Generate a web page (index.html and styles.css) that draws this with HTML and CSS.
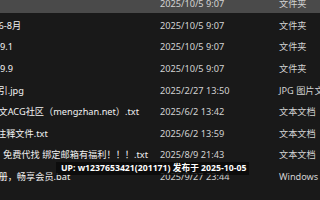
FILE: index.html
```html
<!DOCTYPE html>
<html lang="zh-CN">
<head>
<meta charset="utf-8">
<link rel="stylesheet" href="styles.css">
</head>
<body>
<div class="list">
  <div class="row selected"><div class="name"></div><div class="date">2025/10/5 9:07</div><div class="type">文件夹</div></div>
  <div class="row"><div class="name clip">6-8月</div><div class="date">2025/10/5 9:07</div><div class="type">文件夹</div></div>
  <div class="row"><div class="name">9.1</div><div class="date">2025/10/5 9:07</div><div class="type">文件夹</div></div>
  <div class="row"><div class="name">9.9</div><div class="date">2025/10/5 9:07</div><div class="type">文件夹</div></div>
  <div class="row"><div class="name clip">引.jpg</div><div class="date">2025/2/27 13:50</div><div class="type">JPG 图片文件</div></div>
  <div class="row"><div class="name clip">文ACG社区（mengzhan.net）.txt</div><div class="date">2025/6/2 13:42</div><div class="type">文本文档</div></div>
  <div class="row"><div class="name clip-more">注释文件.txt</div><div class="date">2025/6/2 13:59</div><div class="type">文本文档</div></div>
  <div class="row"><div class="name shift">免费代找 绑定邮箱有福利！！！.txt</div><div class="date">2025/8/9 21:43</div><div class="type">文本文档</div></div>
  <div class="row"><div class="name clip">册，畅享会员.bat</div><div class="date">2025/9/27 23:44</div><div class="type">Windows 批处理文件</div></div>
</div>
<div class="badge">UP: w1237653421(201171) 发布于 2025-10-05</div>
</body>
</html>
```
FILE: styles.css
```css
html, body {
  margin: 0;
  padding: 0;
  background: #191919;
  width: 320px;
  height: 200px;
  overflow: hidden;
  font-family: "Noto Sans", "Noto Sans CJK SC", sans-serif;
  font-size: 9.2px;
}
.list {
  margin-top: -8.6px;
}
.row {
  height: 21.6px;
  display: flex;
  align-items: center;
  padding-top: 4px;
  box-sizing: border-box;
  white-space: nowrap;
  line-height: 12px;
}
.row.selected {
  background: #4a4a4a;
}
.name {
  width: 160px;
  flex: none;
  overflow: hidden;
  color: #f2f2f2;
}
.name.clip { text-indent: -1.5px; }
.name.clip-more { text-indent: -3px; }
.name.shift { text-indent: 3px; }
.date {
  width: 119px;
  flex: none;
  color: #d2d2d2;
}
.type {
  flex: none;
  color: #d2d2d2;
}
.badge {
  position: absolute;
  left: 56px;
  top: 162px;
  height: 13px;
  padding: 0 3px 0 5px;
  background: rgba(10, 10, 10, 0.82);
  color: #ffffff;
  font-weight: bold;
  font-size: 8.7px;
  line-height: 13px;
  white-space: nowrap;
}
```
